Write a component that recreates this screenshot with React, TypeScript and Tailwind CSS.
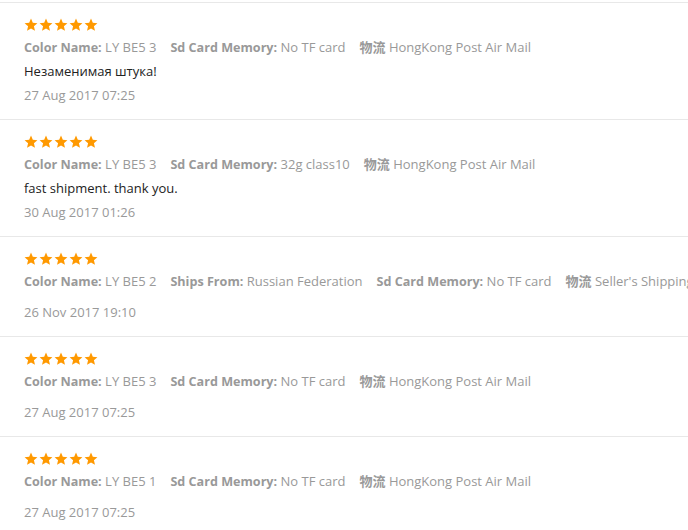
const reviews = [
  {
    attrs: [
      ["Color Name:", "LY BE5 3"],
      ["Sd Card Memory:", "No TF card"],
      ["物流", "HongKong Post Air Mail"],
    ],
    text: "Незаменимая штука!",
    date: "27 Aug 2017 07:25",
  },
  {
    attrs: [
      ["Color Name:", "LY BE5 3"],
      ["Sd Card Memory:", "32g class10"],
      ["物流", "HongKong Post Air Mail"],
    ],
    text: "fast shipment. thank you.",
    date: "30 Aug 2017 01:26",
  },
  {
    attrs: [
      ["Color Name:", "LY BE5 2"],
      ["Ships From:", "Russian Federation"],
      ["Sd Card Memory:", "No TF card"],
      ["物流", "Seller's Shipping Method"],
    ],
    text: "",
    date: "26 Nov 2017 19:10",
  },
  {
    attrs: [
      ["Color Name:", "LY BE5 3"],
      ["Sd Card Memory:", "No TF card"],
      ["物流", "HongKong Post Air Mail"],
    ],
    text: "",
    date: "27 Aug 2017 07:25",
  },
  {
    attrs: [
      ["Color Name:", "LY BE5 1"],
      ["Sd Card Memory:", "No TF card"],
      ["物流", "HongKong Post Air Mail"],
    ],
    text: "",
    date: "27 Aug 2017 07:25",
  },
];

function Star() {
  return (
    <svg width="14" height="14" viewBox="0 0 24 24" className="block">
      <polygon
        points="12,1 15.1,8.3 23,8.9 17,14.1 18.8,22 12,17.8 5.2,22 7,14.1 1,8.9 8.9,8.3"
        fill="#ff9900"
      />
    </svg>
  );
}

export default function App() {
  return (
    <div
      className="w-[688px] h-[530px] overflow-hidden bg-white text-[13px]"
      style={{ fontFamily: '"Open Sans", "Noto Sans CJK SC", sans-serif' }}
    >
      <div className="mt-[2px] border-t border-[#e8e8e8]">
        {reviews.map((r, i) => (
          <div key={i} className="border-b border-[#e8e8e8] pl-6 pt-[15px] pb-3">
            {/* rating */}
            <div className="flex gap-[1px] h-[14px]">
              <Star />
              <Star />
              <Star />
              <Star />
              <Star />
            </div>
            <div className="mt-[3px] h-6 leading-6 whitespace-nowrap overflow-hidden text-[#999]">
              {r.attrs.map(([k, v], j) => (
                <span key={j} className="mr-[14px]">
                  {k === "物流" ? (
                    <b className="font-bold text-[13px] text-[#999]">{k}</b>
                  ) : (
                    <b className="font-bold text-[12.6px] text-[#999]">{k}</b>
                  )}{" "}
                  {v}
                </span>
              ))}
            </div>
            {r.text ? (
              <div className="leading-6 text-[#222]">{r.text}</div>
            ) : (
              <div className="h-[7px]" />
            )}
            <div className="leading-6 text-[#999]">{r.date}</div>
          </div>
        ))}
      </div>
    </div>
  );
}
